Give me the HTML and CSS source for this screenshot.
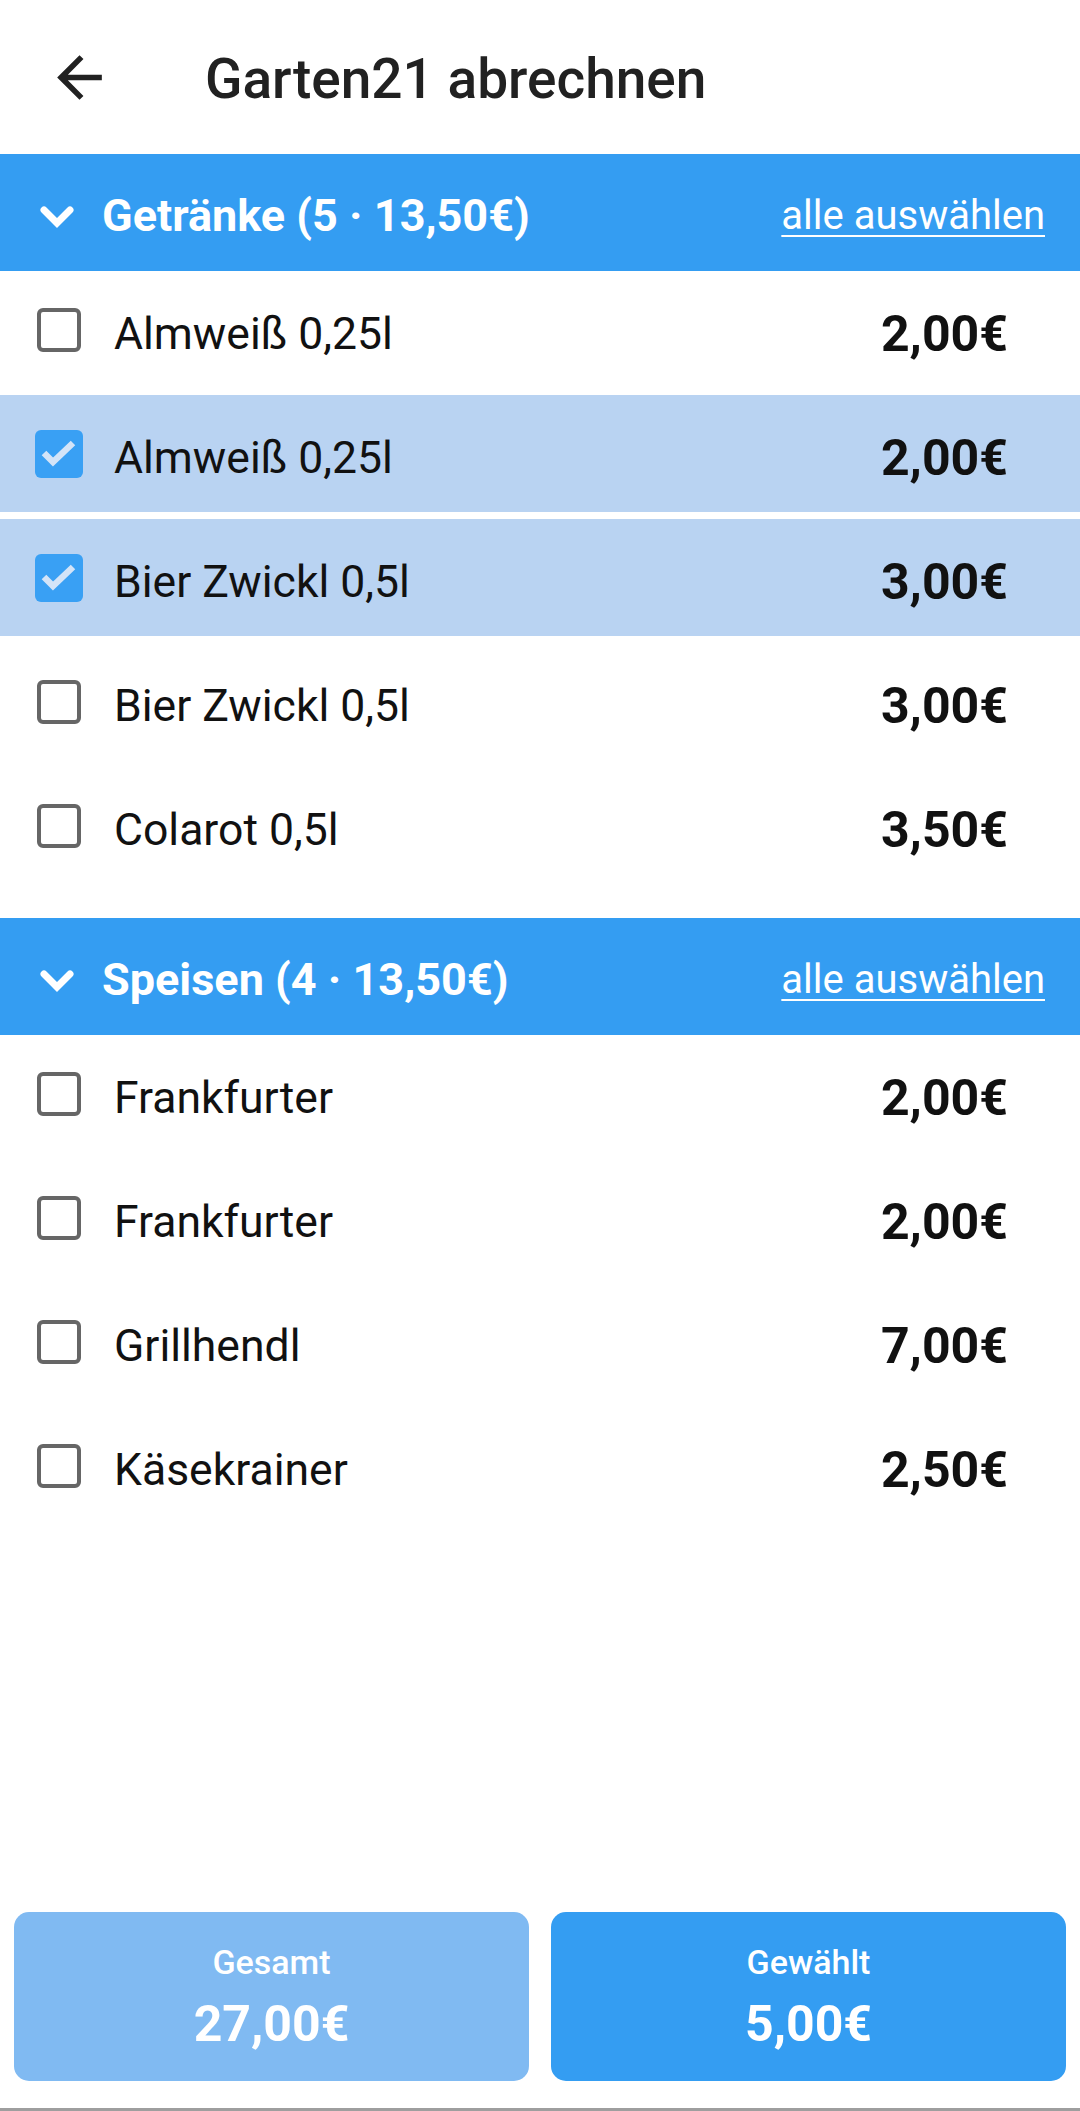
FILE: index.html
```html
<!DOCTYPE html>
<html lang="de">
<head>
<meta charset="utf-8">
<title>Garten21 abrechnen</title>
<link rel="stylesheet" href="styles.css">
</head>
<body>
<div class="screen">
  <header class="appbar">
    <svg class="back" viewBox="0 0 24 24" width="67" height="67"><path d="M20 11H7.83l5.59-5.59L12 4l-8 8 8 8 1.41-1.41L7.83 13H20v-2z" fill="#212121"/></svg>
    <h1 class="title">Garten21 abrechnen</h1>
  </header>

  <main class="list">
    <section class="group">
      <div class="group-head">
        <svg class="chev" viewBox="0 0 36 22" width="36" height="22"><polyline points="5,4 18,17 31,4" fill="none" stroke="#fff" stroke-width="7" stroke-linecap="round" stroke-linejoin="miter"/></svg>
        <span class="group-title">Getränke (5 · 13,50€)</span>
        <span class="select-all">alle auswählen</span>
      </div>
      <div class="item"><span class="cb"><span class="box"></span></span><span class="name">Almweiß 0,25l</span><span class="price">2,00€</span></div>
      <div class="item selected"><span class="cb"><span class="box checked"><svg viewBox="0 0 48 48" width="48" height="48"><polyline points="9,23 18,32 38,13" fill="none" stroke="#d3e4f8" stroke-width="6.5"/></svg></span></span><span class="name">Almweiß 0,25l</span><span class="price">2,00€</span></div>
      <div class="item selected"><span class="cb"><span class="box checked"><svg viewBox="0 0 48 48" width="48" height="48"><polyline points="9,23 18,32 38,13" fill="none" stroke="#d3e4f8" stroke-width="6.5"/></svg></span></span><span class="name">Bier Zwickl 0,5l</span><span class="price">3,00€</span></div>
      <div class="item"><span class="cb"><span class="box"></span></span><span class="name">Bier Zwickl 0,5l</span><span class="price">3,00€</span></div>
      <div class="item"><span class="cb"><span class="box"></span></span><span class="name">Colarot 0,5l</span><span class="price">3,50€</span></div>
    </section>

    <section class="group">
      <div class="group-head">
        <svg class="chev" viewBox="0 0 36 22" width="36" height="22"><polyline points="5,4 18,17 31,4" fill="none" stroke="#fff" stroke-width="7" stroke-linecap="round" stroke-linejoin="miter"/></svg>
        <span class="group-title">Speisen (4 · 13,50€)</span>
        <span class="select-all">alle auswählen</span>
      </div>
      <div class="item"><span class="cb"><span class="box"></span></span><span class="name">Frankfurter</span><span class="price">2,00€</span></div>
      <div class="item"><span class="cb"><span class="box"></span></span><span class="name">Frankfurter</span><span class="price">2,00€</span></div>
      <div class="item"><span class="cb"><span class="box"></span></span><span class="name">Grillhendl</span><span class="price">7,00€</span></div>
      <div class="item"><span class="cb"><span class="box"></span></span><span class="name">Käsekrainer</span><span class="price">2,50€</span></div>
    </section>
  </main>

  <footer class="totals">
    <div class="total total-all">
      <span class="total-label">Gesamt</span>
      <span class="total-value">27,00€</span>
    </div>
    <div class="total total-sel">
      <span class="total-label">Gewählt</span>
      <span class="total-value">5,00€</span>
    </div>
  </footer>
  <div class="navline"></div>
</div>
</body>
</html>
```

FILE: styles.css
```css
* { box-sizing: border-box; }
html, body { margin: 0; padding: 0; background: #fff; }
body { font-family: Roboto, "Liberation Sans", sans-serif; color: #111; }

.screen {
  width: 1080px;
  height: 2111px;
  display: flex;
  flex-direction: column;
}

.appbar {
  height: 154px;
  display: flex;
  align-items: center;
  padding-left: 46px;
  flex-shrink: 0;
}
.back { display: block; }
.title {
  margin: 3px 0 0 92px;
  font-size: 55px;
  font-weight: 500;
  color: #212121;
}

.list { flex: 1; }

.group + .group { margin-top: 34px; }

.group-head {
  height: 117px;
  background: #349df2;
  display: flex;
  align-items: center;
  padding: 0 35px 0 39px;
  color: #fff;
}
.chev { margin-top: 8px; flex-shrink: 0; }
.group-title {
  margin: 5px 0 0 27px;
  font-size: 45px;
  font-weight: 700;
  flex: 1;
}
.select-all {
  margin-top: 5px;
  font-size: 40px;
  text-decoration: underline;
  text-decoration-thickness: 2px;
  text-underline-offset: 6px;
}

.item {
  height: 117px;
  margin-bottom: 7px;
  display: flex;
  align-items: center;
  padding: 0 72px 0 35px;
}
.item.selected { background: #b9d3f2; }

.cb {
  width: 48px;
  height: 48px;
  display: flex;
  align-items: center;
  justify-content: center;
  flex-shrink: 0;
}
.box {
  width: 44px;
  height: 44px;
  border: 4.5px solid #666;
  border-radius: 6px;
}
.box.checked {
  width: 48px;
  height: 48px;
  border: 0;
  background: #39a0f4;
  border-radius: 6px;
}
.box.checked svg { display: block; }

.name {
  margin: 8px 0 0 31px;
  font-size: 44.5px;
  flex: 1;
  color: #111;
}
.price {
  margin-top: 8px;
  font-size: 50px;
  font-weight: 700;
  color: #111;
}

.totals {
  display: flex;
  gap: 22px;
  padding: 0 14px;
  margin-bottom: 27px;
  flex-shrink: 0;
}
.total {
  flex: 1;
  height: 169px;
  border-radius: 15px;
  display: flex;
  flex-direction: column;
  align-items: center;
  color: #fff;
  padding-top: 30px;
}
.total-all { background: #80baf2; }
.total-sel { background: #349df2; }
.total-label { font-size: 34px; font-weight: 500; }
.total-value { font-size: 50px; font-weight: 700; margin-top: 13px; }

.navline { height: 3px; background: #9e9e9e; flex-shrink: 0; }
```
